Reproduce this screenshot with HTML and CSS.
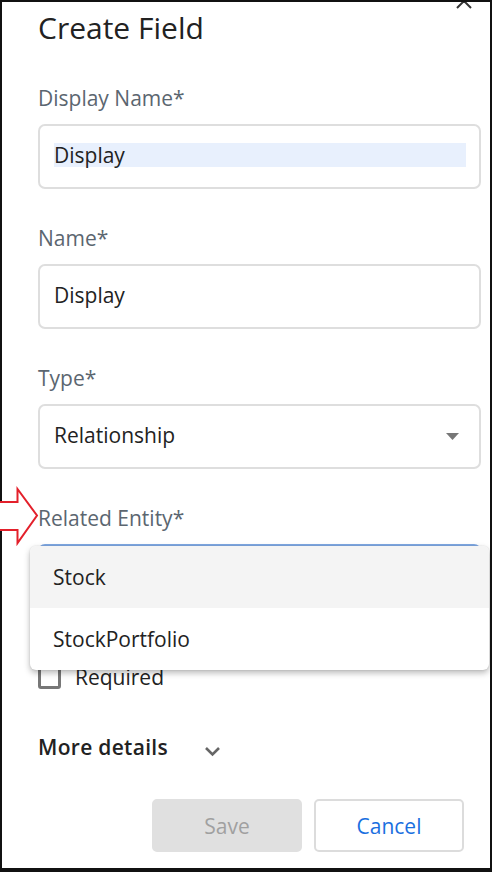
FILE: index.html
```html
<!DOCTYPE html>
<html lang="en">
<head>
<meta charset="utf-8">
<title>Create Field</title>
<link rel="stylesheet" href="styles.css">
</head>
<body>
<div class="frame">
  <span class="close" aria-label="Close">
    <svg width="18" height="18" viewBox="0 0 18 18"><path d="M2 2 L16 16 M16 2 L2 16" stroke="#333" stroke-width="2" fill="none"/></svg>
  </span>
  <h1 class="title">Create Field</h1>

  <div class="field">
    <label class="label">Display Name*</label>
    <div class="input"><span class="value selected">Display</span></div>
  </div>

  <div class="field">
    <label class="label">Name*</label>
    <div class="input"><span class="value">Display</span></div>
  </div>

  <div class="field">
    <label class="label">Type*</label>
    <div class="input select">
      <span class="value">Relationship</span>
      <svg class="caret" width="13" height="7" viewBox="0 0 13 7"><polygon points="0,0 13,0 6.5,7" fill="#777"/></svg>
    </div>
  </div>

  <div class="field">
    <label class="label">Related Entity*</label>
    <div class="input select focused">
      <ul class="menu">
        <li class="item hover">Stock</li>
        <li class="item">StockPortfolio</li>
      </ul>
    </div>
  </div>

  <label class="check"><span class="box"></span>Required</label>

  <div class="more">More details
    <svg class="chev" width="17" height="11" viewBox="0 0 17 11"><path d="M2 2 L8.5 8.5 L15 2" stroke="#666" stroke-width="2.6" fill="none"/></svg>
  </div>

  <div class="actions">
    <button class="btn save" disabled>Save</button>
    <button class="btn cancel">Cancel</button>
  </div>
</div>
<svg class="annot" width="40" height="60" viewBox="0 0 40 60"><polygon points="-2,14 17.5,14 17.5,1 37,27.5 17.5,55 17.5,42 -2,42" fill="#fff" stroke="#e3202b" stroke-width="2"/></svg>
</body>
</html>
```

FILE: styles.css
```css
html, body {
  margin: 0;
  padding: 0;
  background: #fff;
}
body {
  font-family: "Open Sans", "Noto Sans", sans-serif;
  color: #222;
}
.frame {
  position: relative;
  box-sizing: border-box;
  width: 492px;
  height: 872px;
  border: 2px solid #111;
  border-bottom-width: 4px;
  padding: 6px 9px 0 36px;
  overflow: hidden;
}
.close {
  position: absolute;
  left: 453px;
  top: -10px;
  width: 18px;
  height: 18px;
}
.close svg { display: block; }
.title {
  margin: 0;
  font-size: 30px;
  line-height: 40px;
  font-weight: 400;
  color: #222;
}
.field {
  margin-top: 36px;
}
.field + .field {
  margin-top: 35px;
}
.label {
  display: block;
  font-size: 21px;
  line-height: 28px;
  color: #5b6670;
  margin-bottom: 12px;
}
.input {
  position: relative;
  box-sizing: border-box;
  height: 65px;
  border: 2px solid #dedede;
  border-radius: 7px;
  padding: 0 13px 0 14px;
  display: flex;
  align-items: center;
}
.value {
  flex: 1;
  font-size: 21px;
  line-height: 24px;
  margin-bottom: 3px;
  color: #222;
}
.value.selected {
  background: #e8f0fd;
}
.caret {
  display: block;
  margin-right: 7px;
}
.input.focused {
  border-top-color: #7fa8e2;
}
.menu {
  position: absolute;
  left: -10px;
  top: 0;
  width: 459px;
  margin: 0;
  padding: 0;
  list-style: none;
  background: #fff;
  border-radius: 6px;
  box-shadow: 0 3px 6px rgba(0, 0, 0, 0.28), 0 0 2px rgba(0, 0, 0, 0.12);
  overflow: hidden;
  z-index: 2;
}
.item {
  height: 62px;
  line-height: 62px;
  padding-left: 23px;
  font-size: 21px;
  color: #222;
}
.item.hover {
  background: #f4f4f4;
}
.check {
  display: flex;
  align-items: center;
  margin-top: 54px;
  height: 28px;
  font-size: 21px;
  line-height: 28px;
  color: #222;
}
.box {
  box-sizing: border-box;
  width: 23px;
  height: 23px;
  border: 3px solid #777;
  border-radius: 3px;
  margin-left: 0;
  margin-right: 14px;
}
.more {
  display: flex;
  align-items: center;
  margin-top: 42px;
  font-size: 21px;
  line-height: 28px;
  font-weight: 600;
  letter-spacing: 0.3px;
  color: #222;
}
.chev {
  display: block;
  margin-left: 36px;
  margin-top: 8px;
}
.actions {
  display: flex;
  justify-content: flex-end;
  gap: 12px;
  margin-top: 38px;
  padding-right: 17px;
}
.btn {
  box-sizing: border-box;
  width: 150px;
  height: 53px;
  border-radius: 5px;
  font-family: "Open Sans", "Noto Sans", sans-serif;
  font-size: 21px;
  padding: 0;
}
.save {
  background: #e0e0e0;
  border: 2px solid #e0e0e0;
  color: #a0a0a0;
}
.cancel {
  background: #fff;
  border: 2px solid #dcdcdc;
  color: #1a6fdf;
}
.annot {
  position: absolute;
  left: 0;
  top: 488px;
  overflow: visible;
}
```
